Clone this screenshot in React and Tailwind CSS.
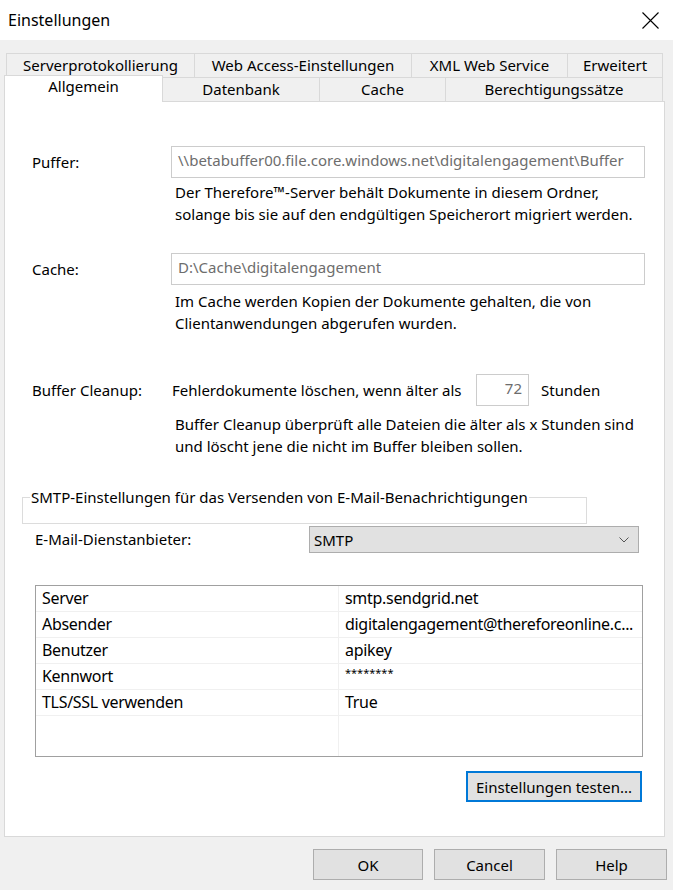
import React from "react";

const rows = [
  ["Server", "smtp.sendgrid.net"],
  ["Absender", "digitalengagement@thereforeonline.c..."],
  ["Benutzer", "apikey"],
  ["Kennwort", "********"],
  ["TLS/SSL verwenden", "True"],
];

const TabBack = ({ label, width, last }) => (
  <div
    className={`h-[24px] ${width} bg-[#f0f0f0] border-t border-l border-[#d9d9d9] ${last ? "border-r" : ""} flex items-start justify-center pt-[1px] leading-[20px]`}
  >
    {label}
  </div>
);

const TabFront = ({ label, width }) => (
  <div className={`h-[24px] ${width} bg-[#f0f0f0] border-t border-r border-[#d9d9d9] flex items-start justify-center pt-[1px] leading-[20px]`}>
    {label}
  </div>
);

const DialogButton = ({ label, width }) => (
  <button className={`h-[31px] ${width} bg-[#e1e1e1] border border-[#adadad] flex items-center justify-center leading-[20px]`}>
    {label}
  </button>
);

export default function App() {
  return (
    <div className="w-[673px] h-[890px] bg-[#f0f0f0] text-black text-[15px] font-['Noto_Sans','Open_Sans',sans-serif] overflow-hidden">
      {/* Title bar */}
      <div className="h-[40px] bg-white flex items-center justify-between pl-[8px] pr-[14px]">
        <span className="text-[16px] leading-[22px]">Einstellungen</span>
        <svg width="17" height="17" viewBox="0 0 17 17">
          <path d="M0.5 0.5L16.5 16.5M16.5 0.5L0.5 16.5" stroke="#000" strokeWidth="1.1" />
        </svg>
      </div>

      {/* Tabs */}
      <div className="pt-[13px]">
        <div className="flex ml-[6px]">
          <TabBack label="Serverprotokollierung" width="w-[188px]" />
          <TabBack label="Web Access-Einstellungen" width="w-[217px]" />
          <TabBack label="XML Web Service" width="w-[156px]" />
          <TabBack label="Erweitert" width="w-[96px]" last />
        </div>
        <div className="flex items-end ml-[4px] h-[24px] relative z-10">
          <div className="h-[27px] w-[159px] -mb-px bg-white border-t border-l border-r border-[#d9d9d9] flex items-start justify-center leading-[20px]">
            Allgemein
          </div>
          <TabFront label="Datenbank" width="w-[157px]" />
          <TabFront label="Cache" width="w-[126px]" />
          <TabFront label="Berechtigungssätze" width="w-[217px]" />
        </div>
      </div>

      {/* Panel */}
      <div className="ml-[4px] w-[661px] h-[736px] bg-white border border-[#d9d9d9] pt-[44px]">
        <div className="flex items-center h-[32px] pl-[27px]">
          <span className="w-[139px]">Puffer:</span>
          <div className="w-[474px] h-[32px] border border-[#cccccc] px-[6px] pt-[3px] leading-[20px] text-[#6d6d6d] whitespace-nowrap overflow-hidden">
            \\betabuffer00.file.core.windows.net\digitalengagement\Buffer
          </div>
        </div>
        <p className="ml-[170px] mt-[3px] leading-[22px] whitespace-nowrap">
          Der Therefore™-Server behält Dokumente in diesem Ordner,
          <br />
          solange bis sie auf den endgültigen Speicherort migriert werden.
        </p>

        <div className="flex items-center h-[32px] pl-[27px] mt-[28px]">
          <span className="w-[139px]">Cache:</span>
          <div className="w-[474px] h-[32px] border border-[#cccccc] px-[6px] pt-[3px] leading-[20px] text-[#6d6d6d] whitespace-nowrap">
            D:\Cache\digitalengagement
          </div>
        </div>
        <p className="ml-[170px] mt-[5px] leading-[22px] whitespace-nowrap">
          Im Cache werden Kopien der Dokumente gehalten, die von
          <br />
          Clientanwendungen abgerufen wurden.
        </p>

        <div className="flex items-center h-[32px] pl-[27px] mt-[40px]">
          <span className="w-[140px]">Buffer Cleanup:</span>
          <span className="w-[304px] whitespace-nowrap">Fehlerdokumente löschen, wenn älter als</span>
          <div className="w-[53px] h-[32px] border border-[#cccccc] pr-[6px] pt-[3px] leading-[20px] text-right text-[#6d6d6d]">
            72
          </div>
          <span className="ml-[12px]">Stunden</span>
        </div>
        <p className="ml-[170px] mt-[7px] leading-[22px] whitespace-nowrap">
          Buffer Cleanup überprüft alle Dateien die älter als x Stunden sind
          <br />
          und löscht jene die nicht im Buffer bleiben sollen.
        </p>

        {/* SMTP group */}
        <div className="relative ml-[17px] mt-[40px] w-[565px] h-[27px] border border-[#dcdcdc]">
          <span className="absolute left-[7px] -top-[12px] bg-white px-[1px] leading-[22px] whitespace-nowrap">
            SMTP-Einstellungen für das Versenden von E-Mail-Benachrichtigungen
          </span>
        </div>

        <div className="flex items-center mt-[2px] pl-[30px]">
          <span className="w-[274px]">E-Mail-Dienstanbieter:</span>
          <div className="w-[330px] h-[27px] bg-[#e1e1e1] border border-[#adadad] flex items-center justify-between pl-[4px] pr-[9px]">
            <span className="leading-[20px]">SMTP</span>
            <svg width="10" height="6" viewBox="0 0 10 6">
              <path d="M0.5 0.5L5 5L9.5 0.5" fill="none" stroke="#555" strokeWidth="1" />
            </svg>
          </div>
        </div>

        {/* Properties table */}
        <div className="ml-[30px] mt-[32px] w-[608px] h-[172px] border border-[#a0a0a0] flex flex-col text-[16px] tracking-[-0.3px]">
          {rows.map(([k, v]) => (
            <div key={k} className="flex h-[26px] border-b border-[#f0f0f0]">
              <div className="w-[303px] border-r border-[#f0f0f0] pl-[6px] leading-[25px] whitespace-nowrap">{k}</div>
              <div className={`flex-1 pl-[6px] whitespace-nowrap overflow-hidden ${k === "Kennwort" ? "text-[11px] leading-[18px] tracking-normal" : "leading-[25px]"}`}>
                {v}
              </div>
            </div>
          ))}
          <div className="flex flex-1">
            <div className="w-[303px] border-r border-[#f0f0f0]" />
            <div className="flex-1" />
          </div>
        </div>

        <div className="flex justify-end mt-[14px] mr-[22px]">
          <button className="h-[31px] w-[176px] bg-[#e1e1e1] border-2 border-[#0078d7] flex items-center justify-center leading-[20px]">
            Einstellungen testen...
          </button>
        </div>
      </div>

      {/* Bottom buttons */}
      <div className="flex justify-end gap-[11px] mt-[12px] pr-[6px]">
        <DialogButton label="OK" width="w-[110px]" />
        <DialogButton label="Cancel" width="w-[111px]" />
        <DialogButton label="Help" width="w-[111px]" />
      </div>
    </div>
  );
}
